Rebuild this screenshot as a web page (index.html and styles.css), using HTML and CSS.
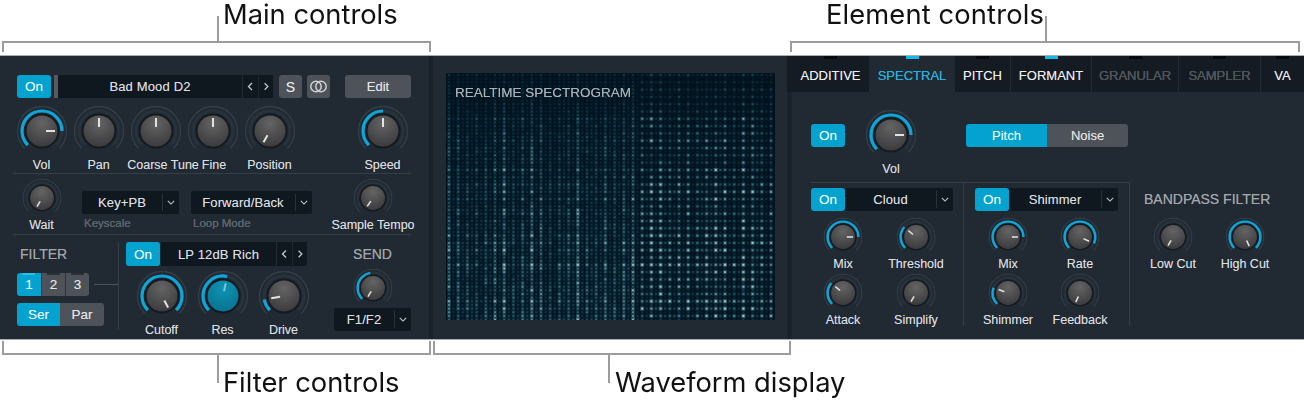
FILE: index.html
```html
<!DOCTYPE html>
<html lang="en">
<head>
<meta charset="utf-8">
<title>Sculpture synth controls</title>
<link rel="stylesheet" href="styles.css">
</head>
<body>
<div class="callouts callouts-top">
  <div class="bracket bracket-main"><span class="stem stem-main"></span><span class="callout callout-main">Main controls</span></div>
  <div class="bracket bracket-element"><span class="stem stem-element"></span><span class="callout callout-element">Element controls</span></div>
</div>

<main class="panel">
  <section class="left">
    <div class="row-head">
      <button class="btn on w34">On</button>
      <span class="grip"></span>
      <div class="display d-preset">Bad Mood D2</div>
      <div class="steppers s30"><svg viewBox="0 0 15 23"><polyline points="9,8 5.5,11.5 9,15"/></svg><svg viewBox="0 0 15 23"><polyline points="6,8 9.5,11.5 6,15"/></svg></div>
      <button class="btn gray btn-s">S</button>
      <button class="btn gray btn-link"><svg viewBox="0 0 23 23"><circle cx="9" cy="11.5" r="5.2"/><circle cx="14" cy="11.5" r="5.2"/></svg></button>
      <button class="btn gray btn-edit">Edit</button>
    </div>

    <div class="row-knobs">
      <div class="cell"><svg class="knob" viewBox="-26 -26 52 52">
        <defs>
          <radialGradient id="faceGrad" cx="50%" cy="25%" r="80%"><stop offset="0" stop-color="#646465"/><stop offset="1" stop-color="#39393b"/></radialGradient>
          <radialGradient id="faceOnGrad" cx="50%" cy="25%" r="80%"><stop offset="0" stop-color="#0f93b4"/><stop offset="1" stop-color="#07718e"/></radialGradient>
          <g id="base"><circle class="ring" r="24.5" pathLength="360" stroke-dasharray="270 360" transform="rotate(135)"/><circle class="track" r="20" pathLength="360" stroke-dasharray="270 360" transform="rotate(135)"/><circle class="well" r="17.5"/></g>
          <circle id="face" r="15.5" fill="url(#faceGrad)"/>
          <circle id="face-on" r="15.5" fill="url(#faceOnGrad)"/>
        </defs>
        <use href="#base"/><circle class="arc" r="20" pathLength="360" stroke-dasharray="225 360" transform="rotate(135)"/><use href="#face"/><line class="tick" y1="-13" y2="-4" transform="rotate(90)"/></svg><span class="lbl">Vol</span></div>
      <div class="cell"><svg class="knob" viewBox="-26 -26 52 52"><use href="#base"/><use href="#face"/><line class="tick" y1="-13" y2="-4"/></svg><span class="lbl">Pan</span></div>
      <div class="cell"><svg class="knob" viewBox="-26 -26 52 52"><use href="#base"/><use href="#face"/><line class="tick" y1="-13" y2="-4"/></svg><span class="lbl lbl-coarse">Coarse Tune</span></div>
      <div class="cell"><svg class="knob" viewBox="-26 -26 52 52"><use href="#base"/><use href="#face"/><line class="tick" y1="-13" y2="-4"/></svg><span class="lbl lbl-fine">Fine</span></div>
      <div class="cell"><svg class="knob" viewBox="-26 -26 52 52"><use href="#base"/><use href="#face"/><line class="tick" y1="-13" y2="-5" transform="rotate(-150)"/></svg><span class="lbl">Position</span></div>
      <div class="cell cell-speed"><svg class="knob" viewBox="-26 -26 52 52"><use href="#base"/><circle class="arc" r="20" pathLength="360" stroke-dasharray="135 360" transform="rotate(135)"/><use href="#face"/><line class="tick" y1="-13" y2="-4"/></svg><span class="lbl">Speed</span></div>
    </div>

    <div class="row-mode">
      <div class="cell"><svg class="knob sm" viewBox="-26 -26 52 52"><use href="#base"/><use href="#face"/><line class="tick" y1="-13" y2="-5" transform="rotate(-150)"/></svg><span class="lbl">Wait</span></div>
      <div class="field field-key">
        <div class="dropdown dd-key"><span class="dd-text">Key+PB</span><span class="dd-chev"><svg viewBox="0 0 10 6"><polyline points="1,1 5,5 9,1"/></svg></span></div>
        <span class="caption">Keyscale</span>
      </div>
      <div class="field field-loop">
        <div class="dropdown dd-loop"><span class="dd-text">Forward/Back</span><span class="dd-chev"><svg viewBox="0 0 10 6"><polyline points="1,1 5,5 9,1"/></svg></span></div>
        <span class="caption">Loop Mode</span>
      </div>
      <div class="cell cell-tempo"><svg class="knob sm" viewBox="-26 -26 52 52"><use href="#base"/><use href="#face"/><line class="tick" y1="-13" y2="-5" transform="rotate(-145)"/></svg><span class="lbl">Sample Tempo</span></div>
    </div>

    <div class="row-filter">
      <div class="filter-a">
        <div class="title">FILTER</div>
        <div class="nums">
          <div class="seg"><button class="seg-b on n24 lit">1</button><button class="seg-b gray n24">2</button><button class="seg-b gray n24">3</button></div>
          <span class="connector"></span>
        </div>
        <div class="seg seg-serpar"><button class="seg-b on ser">Ser</button><button class="seg-b gray par">Par</button></div>
      </div>
      <div class="filter-b">
        <div class="row-fhead">
          <button class="btn on w34 h24">On</button>
          <div class="display d-filter">LP 12dB Rich</div>
          <div class="steppers s30 h24"><svg viewBox="0 0 15 23"><polyline points="9,8 5.5,11.5 9,15"/></svg><svg viewBox="0 0 15 23"><polyline points="6,8 9.5,11.5 6,15"/></svg></div>
        </div>
        <div class="fknobs">
          <div class="cell"><svg class="knob" viewBox="-26 -26 52 52"><use href="#base"/><circle class="arc" r="20" pathLength="360" stroke-dasharray="270 360" transform="rotate(135)"/><use href="#face"/><line class="tick" y1="-13" y2="-5" transform="rotate(152)"/></svg><span class="lbl">Cutoff</span></div>
          <div class="cell"><svg class="knob" viewBox="-26 -26 52 52"><use href="#base"/><circle class="arc" r="20" pathLength="360" stroke-dasharray="147 360" transform="rotate(135)"/><use href="#face-on"/><line class="tick tick-on" y1="-13" y2="-5" transform="rotate(12)"/></svg><span class="lbl">Res</span></div>
          <div class="cell"><svg class="knob" viewBox="-26 -26 52 52"><use href="#base"/><circle class="arc" r="20" pathLength="360" stroke-dasharray="35 360" transform="rotate(135)"/><use href="#face"/><line class="tick" y1="-13" y2="-4" transform="rotate(-100)"/></svg><span class="lbl">Drive</span></div>
        </div>
      </div>
      <div class="filter-c">
        <div class="title title-send">SEND</div>
        <div class="send-knob"><svg class="knob sm" viewBox="-26 -26 52 52"><use href="#base"/><circle class="arc" r="20" pathLength="360" stroke-dasharray="125 360" transform="rotate(135)"/><use href="#face"/><line class="tick" y1="-13" y2="-5" transform="rotate(-150)"/></svg></div>
        <div class="dropdown dd-send"><span class="dd-text">F1/F2</span><span class="dd-chev"><svg viewBox="0 0 10 6"><polyline points="1,1 5,5 9,1"/></svg></span></div>
      </div>
    </div>
  </section>

  <div class="strip"></div>

  <section class="center">
    <div class="scope">
      <canvas id="spectrogram" width="329" height="247"></canvas>
      <span class="scope-title">REALTIME SPECTROGRAM</span>
    </div>
  </section>

  <section class="right">
    <nav class="tabs">
      <div class="tab t-additive"><i class="led"></i><span>ADDITIVE</span></div>
      <div class="tab t-spectral active"><i class="led lit"></i><span>SPECTRAL</span></div>
      <div class="tab t-pitch"><i class="led"></i><span>PITCH</span></div>
      <div class="tab t-formant"><i class="led lit"></i><span>FORMANT</span></div>
      <div class="tab t-granular off"><i class="led"></i><span>GRANULAR</span></div>
      <div class="tab t-sampler off"><i class="led"></i><span>SAMPLER</span></div>
      <div class="tab t-va"><i class="led"></i><span>VA</span></div>
    </nav>
    <div class="element">
      <div class="el-top">
        <button class="btn on w34 el-on">On</button>
        <div class="cell el-vol"><svg class="knob" viewBox="-26 -26 52 52"><use href="#base"/><circle class="arc" r="20" pathLength="360" stroke-dasharray="225 360" transform="rotate(135)"/><use href="#face"/><line class="tick" y1="-13" y2="-4" transform="rotate(90)"/></svg><span class="lbl">Vol</span></div>
        <div class="seg seg-pitch"><button class="seg-b on pn">Pitch</button><button class="seg-b gray pn">Noise</button></div>
      </div>
      <div class="el-grid">
        <div class="fx fx-1">
          <div class="fx-head">
            <button class="btn on w34">On</button>
            <div class="dropdown dd-fx1"><span class="dd-text">Cloud</span><span class="dd-chev"><svg viewBox="0 0 10 6"><polyline points="1,1 5,5 9,1"/></svg></span></div>
          </div>
          <div class="fx-knobs">
            <div class="cell c64"><svg class="knob sm" viewBox="-26 -26 52 52"><use href="#base"/><circle class="arc" r="20" pathLength="360" stroke-dasharray="225 360" transform="rotate(135)"/><use href="#face"/><line class="tick" y1="-13" y2="-5" transform="rotate(90)"/></svg><span class="lbl">Mix</span></div>
            <div class="cell c64"><svg class="knob sm" viewBox="-26 -26 52 52"><use href="#base"/><circle class="arc" r="20" pathLength="360" stroke-dasharray="85 360" transform="rotate(135)"/><use href="#face"/><line class="tick" y1="-13" y2="-5" transform="rotate(-50)"/></svg><span class="lbl">Threshold</span></div>
            <div class="cell c64"><svg class="knob sm" viewBox="-26 -26 52 52"><use href="#base"/><circle class="arc" r="20" pathLength="360" stroke-dasharray="85 360" transform="rotate(135)"/><use href="#face"/><line class="tick" y1="-13" y2="-5" transform="rotate(-50)"/></svg><span class="lbl">Attack</span></div>
            <div class="cell c64"><svg class="knob sm" viewBox="-26 -26 52 52"><use href="#base"/><use href="#face"/><line class="tick" y1="-13" y2="-5" transform="rotate(-150)"/></svg><span class="lbl">Simplify</span></div>
          </div>
        </div>
        <div class="fx fx-2">
          <div class="fx-head">
            <button class="btn on w34">On</button>
            <div class="dropdown dd-fx2"><span class="dd-text">Shimmer</span><span class="dd-chev"><svg viewBox="0 0 10 6"><polyline points="1,1 5,5 9,1"/></svg></span></div>
          </div>
          <div class="fx-knobs fx-knobs-2">
            <div class="cell c64"><svg class="knob sm" viewBox="-26 -26 52 52"><use href="#base"/><circle class="arc" r="20" pathLength="360" stroke-dasharray="225 360" transform="rotate(135)"/><use href="#face"/><line class="tick" y1="-13" y2="-5" transform="rotate(90)"/></svg><span class="lbl">Mix</span></div>
            <div class="cell c64"><svg class="knob sm" viewBox="-26 -26 52 52"><use href="#base"/><circle class="arc" r="20" pathLength="360" stroke-dasharray="250 360" transform="rotate(135)"/><use href="#face"/><line class="tick" y1="-13" y2="-5" transform="rotate(115)"/></svg><span class="lbl">Rate</span></div>
            <div class="cell c64"><svg class="knob sm" viewBox="-26 -26 52 52"><use href="#base"/><circle class="arc" r="20" pathLength="360" stroke-dasharray="65 360" transform="rotate(135)"/><use href="#face"/><line class="tick" y1="-13" y2="-5" transform="rotate(-70)"/></svg><span class="lbl">Shimmer</span></div>
            <div class="cell c64"><svg class="knob sm" viewBox="-26 -26 52 52"><use href="#base"/><use href="#face"/><line class="tick" y1="-13" y2="-5" transform="rotate(-155)"/></svg><span class="lbl">Feedback</span></div>
          </div>
        </div>
        <div class="fx-3">
          <div class="title title-band">BANDPASS FILTER</div>
          <div class="fx-knobs fx-knobs-2">
            <div class="cell c64"><svg class="knob sm" viewBox="-26 -26 52 52"><use href="#base"/><use href="#face"/><line class="tick" y1="-13" y2="-5" transform="rotate(-150)"/></svg><span class="lbl">Low Cut</span></div>
            <div class="cell c64"><svg class="knob sm" viewBox="-26 -26 52 52"><use href="#base"/><circle class="arc" r="20" pathLength="360" stroke-dasharray="270 360" transform="rotate(135)"/><use href="#face"/><line class="tick" y1="-13" y2="-5" transform="rotate(155)"/></svg><span class="lbl">High Cut</span></div>
          </div>
        </div>
      </div>
    </div>
  </section>
</main>

<div class="callouts callouts-bottom">
  <div class="bracket flip bracket-filter"><span class="stem stem-filter"></span><span class="callout callout-filter">Filter controls</span></div>
  <div class="bracket flip bracket-wave"><span class="stem stem-wave"></span><span class="callout callout-wave">Waveform display</span></div>
</div>
<script src="spectrogram.js"></script>
</body>
</html>
```
FILE: styles.css
```css
* { box-sizing: border-box; }
html, body { margin: 0; padding: 0; background: #fff; }
body { width: 1304px; height: 410px; overflow: hidden; font-family: "Liberation Sans", Arial, sans-serif; }

/* callouts */
.callouts { display: flex; filter: blur(.25px); }
.callouts-top { height: 55px; padding-top: 41px; }
.callouts-bottom { height: 70px; padding-top: 1px; }
.bracket { position: relative; height: 11px; border: 2px solid #9c9c9c; border-bottom: 0; }
.bracket.flip { height: 14px; border: 2px solid #9c9c9c; border-top: 0; }
.bracket-main { margin-left: 2px; width: 429px; }
.bracket-element { margin-left: 359px; width: 510px; }
.bracket-filter { margin-left: 2px; width: 429px; }
.bracket-wave { margin-left: 2px; width: 358px; }
.stem { position: absolute; width: 2px; background: #9c9c9c; }
.stem-main { left: 213px; top: -27px; height: 26px; }
.stem-element { left: 253px; top: -27px; height: 26px; }
.stem-filter { left: 213px; top: 12px; height: 30px; }
.stem-wave { left: 173px; top: 12px; height: 30px; }
.callout { position: absolute; font-family: Inter, "Liberation Sans", sans-serif; font-size: 27.3px; line-height: 32px; color: #111; white-space: nowrap; }
.callout-main { left: 219px; top: -44px; }
.callout-element { right: 254px; top: -44px; letter-spacing: .15px; }
.callout-filter { left: 219px; top: 26px; }
.callout-wave { left: 180px; top: 26px; }

/* panel */
.panel { display: flex; height: 285px; background: #212a33; border-top: 1px solid #a9adb1; border-bottom: 1px solid #a9adb1; color: #dcdee0; filter: blur(.3px); text-shadow: 0 0 .5px rgba(255, 255, 255, .45); }
.left { width: 429px; flex: none; padding-top: 19px; }
.strip { width: 4px; flex: none; background: #1a222a; }
.center { width: 354px; flex: none; padding: 17px 0 0 13px; }
.right { flex: 1; display: flex; flex-direction: column; }

/* buttons */
button { font: inherit; border: 0; padding: 0; color: inherit; text-shadow: inherit; }
.btn { display: flex; align-items: center; justify-content: center; height: 23px; border-radius: 3px; font-size: 13.5px; }
.on { background: #04a2ce; color: #eef9fc; }
.gray { background: #4e5259; color: #e6e7e8; }
.w34 { width: 34px; flex: none; }
.h24 { height: 24px; }
.grip { width: 4px; height: 23px; margin-left: 3px; background: #555a60; flex: none; }
.display { display: flex; align-items: center; justify-content: center; height: 23px; background: #0f181f; font-size: 13px; flex: none; letter-spacing: .15px; }
.d-preset { width: 184px; margin-left: 0; }
.d-filter { width: 115px; height: 24px; margin-left: 1px; }
.steppers { display: flex; width: 30px; height: 23px; background: #0f181f; margin-left: 1px; flex: none; }
.steppers.h24 { height: 24px; }
.steppers svg { width: 15px; height: 100%; }
.steppers svg + svg { border-left: 1px solid #1e272f; }
.steppers polyline, .dd-chev polyline { fill: none; stroke: #c7cacd; stroke-width: 1.3; }
.btn-s { width: 23px; margin-left: 6px; font-size: 14px; }
.btn-link { width: 23px; margin-left: 5px; }
.btn-link svg { width: 23px; height: 23px; }
.btn-link circle { fill: none; stroke: #cfd1d3; stroke-width: 1.5; }
.btn-edit { width: 66px; margin-left: 15px; font-size: 13px; }

.row-head { display: flex; margin-left: 17px; }
.row-knobs { display: flex; margin: 7px 18px 0 13px; height: 69px; border-bottom: 1px solid #343e48; width: 398px; }

/* knobs */
.cell { display: flex; flex-direction: column; align-items: center; width: 57px; flex: none; }
.c64 { width: 64px; }
.knob { display: block; width: 52px; height: 52px; flex: none; }
.knob.sm { width: 40px; height: 40px; }
.ring { fill: none; stroke: #343e48; stroke-width: 1.3; }
.track { fill: none; stroke: #29323b; stroke-width: 3; }
.well { fill: #141a20; }
.arc { fill: none; stroke: #0ea6d8; stroke-width: 3.2; }
.tick { stroke: #e2e2e0; stroke-width: 2; }
.tick-on { stroke: #7cc6d6; }
.lbl { font-size: 12.5px; line-height: 14px; margin-top: 1px; white-space: nowrap; color: #dcdee0; }
.lbl-coarse { margin-left: 15px; }
.lbl-fine { margin-left: 3px; }
.cell-speed { margin-left: 56px; }

.row-mode { display: flex; margin-left: 13px; width: 398px; padding-top: 4px; height: 61px; border-bottom: 1px solid #343e48; }
.row-mode .lbl { margin-top: 0; }
.field { display: flex; flex-direction: column; flex: none; padding-top: 13px; }
.field-key { margin-left: 12px; }
.field-loop { margin-left: 12px; }
.caption { font-size: 11.5px; line-height: 14px; margin: 2px 0 0 2px; color: #565d66; }
.cell-tempo { width: 70px; margin-left: 26px; }

.dropdown { display: flex; height: 23px; background: #0f181f; border-radius: 2px; flex: none; font-size: 13px; letter-spacing: .1px; }
.dd-text { flex: 1; display: flex; align-items: center; justify-content: center; }
.dd-chev { width: 17px; display: flex; align-items: center; justify-content: center; border-left: 1px solid #29323b; margin: 3px 0; flex: none; }
.dd-chev svg { width: 8px; height: 5px; }
.dd-key { width: 97px; }
.dd-loop { width: 121px; }
.dd-send { width: 77px; }
.dd-fx1 { width: 108px; }
.dd-fx2 { width: 109px; }

/* filter */
.row-filter { display: flex; }
.title { font-size: 14px; line-height: 24px; color: #a2a7ab; }
.filter-a { width: 102px; margin: 7px 0 0 17px; height: 87px; border-right: 1px solid #343e48; }
.filter-a .title { padding-left: 3px; }
.nums { display: flex; align-items: center; margin-top: 7px; }
.connector { flex: 1; height: 1px; margin-left: 5px; background: #4a535c; }
.seg { display: flex; border-radius: 3px; overflow: hidden; flex: none; }
.seg-b { height: 23px; display: flex; align-items: center; justify-content: center; font-size: 13.5px; }
.n24 { width: 24px; position: relative; }
.n24 + .n24 { border-left: 1px solid #2b3138; }
.n24::before { content: ""; position: absolute; top: 0; left: 5px; width: 13px; height: 2px; background: #2a3037; }
.n24.lit::before { background: #22c2ec; }
.seg-serpar { margin-top: 7px; width: 87px; }
.ser { width: 43px; }
.par { width: 44px; }
.filter-b { margin: 7px 0 0 7px; width: 181px; flex: none; }
.row-fhead { display: flex; }
.fknobs { display: flex; margin: 4px 0 0 5px; }
.fknobs .cell { width: 61px; }
.filter-c { margin: 7px 0 0 27px; width: 77px; flex: none; display: flex; flex-direction: column; align-items: center; }
.send-knob { margin-top: 2px; }

/* spectrogram */
.scope { position: relative; width: 329px; height: 247px; border-radius: 2px; overflow: hidden; background: #02121c; }
.scope canvas { display: block; filter: blur(.6px); }
.scope-title { position: absolute; left: 9px; top: 12px; font-size: 13.5px; line-height: 16px; color: #a9b1b6; white-space: nowrap; }

/* tabs */
.tabs { display: flex; height: 36px; background: #141b22; }
.tab { display: flex; flex-direction: column; align-items: center; flex: none; font-size: 13px; border-right: 1px solid #232c35; color: #f0f1f2; }
.tab span { margin-top: 9px; line-height: 16px; white-space: nowrap; }
.led { display: block; width: 13px; height: 3px; background: #070a0d; }
.led.lit { background: #12b8e6; }
.t-additive { width: 82px; padding-left: 5px; border-right: 0; }
.t-spectral { width: 86px; }
.t-pitch { width: 56px; }
.t-formant { width: 81px; }
.t-granular { width: 87px; }
.t-sampler { width: 82px; }
.t-va { width: 43px; border-right: 0; }
.tab.active { background: #212a33; color: #14b5e2; border-right: 0; }
.tab.off { color: #4a5159; }

/* element */
.element { flex: 1; border-left: 5px solid #1a222a; padding-left: 19px; }
.el-top { display: flex; padding-top: 17px; height: 91px; border-bottom: 1px solid #343e48; width: 319px; }
.el-on { margin-top: 15px; }
.el-vol { width: 52px; margin-left: 20px; }
.seg-pitch { margin: 15px 0 0 49px; height: 23px; }
.pn { width: 81px; font-size: 13px; }
.el-grid { display: flex; }
.fx { height: 143px; padding-top: 5px; border-right: 1px solid #343e48; flex: none; }
.fx-1 { width: 153px; }
.fx-2 { width: 166px; padding-left: 11px; }
.fx-head { display: flex; }
.fx-knobs { display: grid; grid-template-columns: 64px 64px; column-gap: 9px; margin-top: 6px; row-gap: 2px; }
.fx-knobs .lbl { margin-top: 0; }
.fx-knobs-2 { column-gap: 8px; margin-left: 1px; }
.fx-3 { padding: 5px 0 0 10px; flex: none; }
.title-band { padding-left: 4px; line-height: 23px; }
```
FILE: spectrogram.js
```js
(function () {
  var canvas = document.getElementById('spectrogram');
  var ctx = canvas.getContext('2d');
  var W = canvas.width, H = canvas.height;
  var seed = 1234567;
  function rnd() {
    seed = (seed + 0x6D2B79F5) | 0;
    var t = Math.imul(seed ^ (seed >>> 15), 1 | seed);
    t = (t + Math.imul(t ^ (t >>> 7), 61 | t)) ^ t;
    return ((t ^ (t >>> 14)) >>> 0) / 4294967296;
  }
  ctx.fillStyle = '#02121c';
  ctx.fillRect(0, 0, W, H);

  var cols = [];
  for (var i = 0; i * 4.6 + 3 < W; i++) cols.push((i % 2 ? 0.5 : 1) * (0.7 + rnd() * 0.45));
  var rows = [];
  for (var j = 0; j * 3.65 + 2 < H; j++) rows.push(0.8 + rnd() * 0.4);

  for (i = 0; i < cols.length; i++) {
    var x = 3 + i * 4.6;
    var right = x > 195;
    for (j = 0; j < rows.length; j++) {
      var y = 2 + j * 3.65;
      var depth = 0.4 + 0.6 * Math.pow(y / H, 0.8);
      if (y < 45) depth *= 0.75;
      var rowAmp = j % 2 ? (right ? 0.3 : 0.7) : (right ? 1.05 : 0.85);
      var v = cols[i] * rows[j] * rowAmp * depth * (0.6 + rnd() * 0.55);
      if (v < 0.04) continue;
      v = Math.min(1, v);
      var r = Math.round(18 + 130 * v * v);
      var g = Math.round(72 + 90 * v * v + 40 * v);
      var b = Math.round(102 + 80 * v * v + 30 * v);
      ctx.fillStyle = 'rgba(' + r + ',' + g + ',' + b + ',' + (v * 0.4).toFixed(3) + ')';
      ctx.fillRect(x - 2, y - 2, 4, 4);
      ctx.fillStyle = 'rgba(' + r + ',' + g + ',' + b + ',' + Math.min(1, v * 1.1 + 0.1).toFixed(3) + ')';
      ctx.fillRect(x - 1, y - 1, 2, 2);
    }
  }
})();
```
